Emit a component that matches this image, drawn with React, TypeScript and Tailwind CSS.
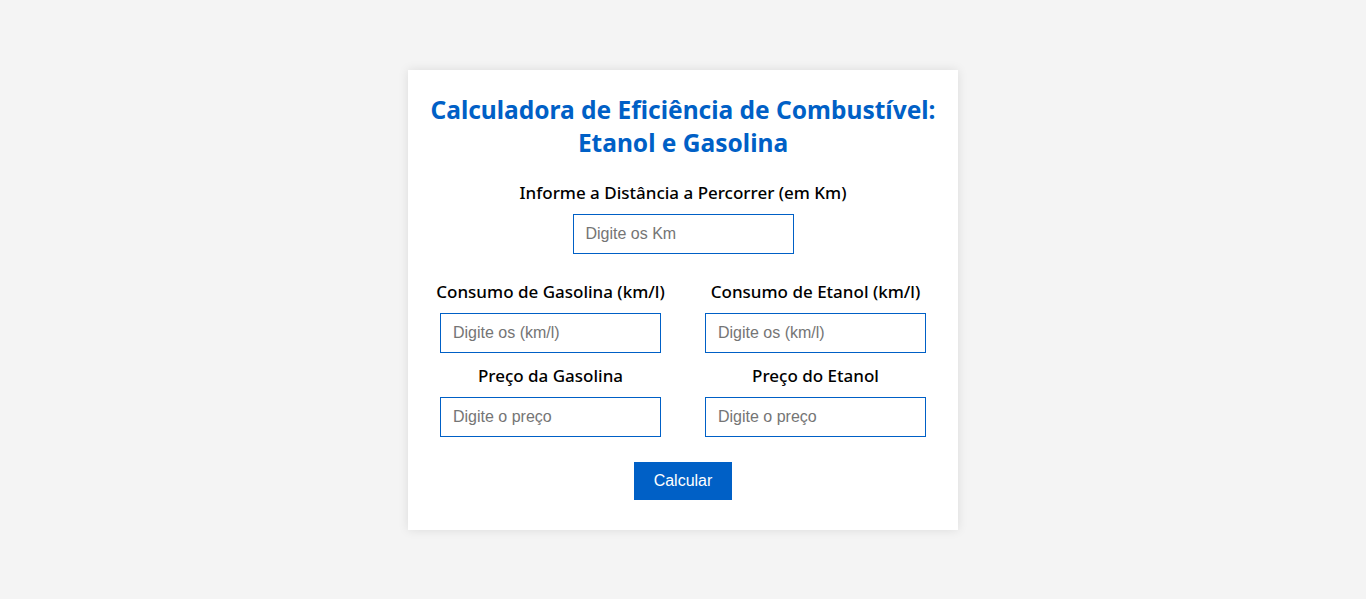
import React from "react";

const label = "text-[17px] leading-[24px] font-medium text-black text-center whitespace-nowrap";
const input =
  "w-[221px] h-[40px] border border-[#0060c6] px-[12px] text-[16px] text-black placeholder:text-[#757575] outline-none bg-white";

function Field({ text, ph, top }: { text: string; ph: string; top: string }) {
  return (
    <div className={`flex flex-col items-center ${top}`}>
      <div className={label} style={{ fontFamily: '"Noto Sans", sans-serif' }}>{text}</div>
      <input className={`${input} mt-[9px]`} placeholder={ph} style={{ fontFamily: '"Liberation Sans", Arial, sans-serif' }} />
    </div>
  );
}

export default function App() {
  return (
    <div className="min-h-[599px] w-full bg-[#f4f4f4] flex justify-center" style={{ fontFamily: '"Noto Sans", sans-serif' }}>
      <div className="mt-[70px] mb-[69px] w-[550px] h-[460px] bg-white shadow-[0_0_10px_rgba(0,0,0,0.1)] flex flex-col items-center pt-[23px]">
        <h2 className="text-[24.5px] leading-[33px] font-bold text-[#0060c6] text-center whitespace-nowrap">
          Calculadora de Eficiência de Combustível:
          <br />
          Etanol e Gasolina
        </h2>
        <Field text="Informe a Distância a Percorrer (em Km)" ph="Digite os Km" top="mt-[22px]" />
        <div className="grid grid-cols-[245px_245px] gap-x-[20px] mt-[26px]">
          <Field text="Consumo de Gasolina (km/l)" ph="Digite os (km/l)" top="" />
          <Field text="Consumo de Etanol (km/l)" ph="Digite os (km/l)" top="" />
          <Field text="Preço da Gasolina" ph="Digite o preço" top="mt-[11px]" />
          <Field text="Preço do Etanol" ph="Digite o preço" top="mt-[11px]" />
        </div>
        <button
          className="mt-[25px] w-[98px] h-[38px] bg-[#0060c6] text-white text-[16px]"
          style={{ fontFamily: '"Liberation Sans", Arial, sans-serif' }}
        >
          Calcular
        </button>
      </div>
    </div>
  );
}
